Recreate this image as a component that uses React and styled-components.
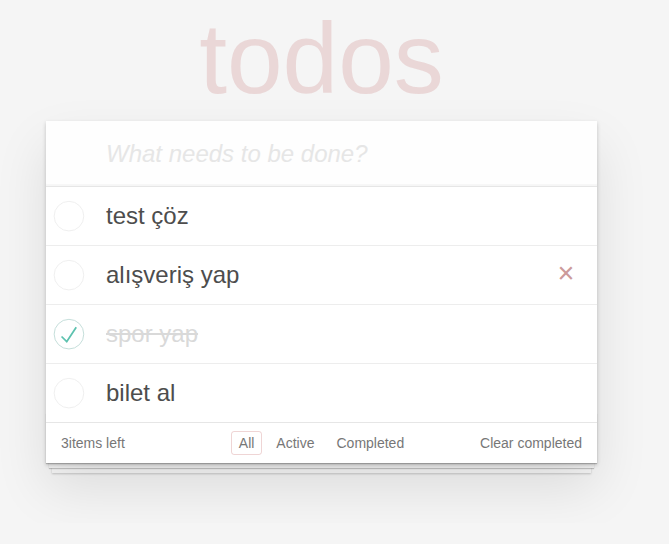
import { createGlobalStyle } from 'styled-components';
import styled from 'styled-components';

const todos = [
  { id: 1, title: 'test çöz', completed: false },
  { id: 2, title: 'alışveriş yap', completed: false, hovered: true },
  { id: 3, title: 'spor yap', completed: true },
  { id: 4, title: 'bilet al', completed: false },
];

const Toggle = ({ checked }) => (
  <ToggleBox>
    <svg width='40' height='40' viewBox='-10 -18 100 135'>
      <circle
        cx='50'
        cy='50'
        r='50'
        fill='none'
        stroke={checked ? '#bddad5' : '#ededed'}
        strokeWidth='3'
      />
      {checked && <path fill='#5dc2af' d='M72 25L42 71 27 56l-4 4 20 20 34-52z' />}
    </svg>
  </ToggleBox>
);

const App = () => {
  const left = todos.filter((t) => !t.completed).length;

  return (
    <>
      <GlobalStyle />
      <Page>
        <Title>todos</Title>
        <TodoApp>
          <Header>
            <NewTodo placeholder='What needs to be done?' />
          </Header>
          <Main>
            <TodoList>
              {todos.map((item) => (
                <TodoItem key={item.id}>
                  <Toggle checked={item.completed} />
                  <Label completed={item.completed}>{item.title}</Label>
                  {item.hovered && <Destroy>×</Destroy>}
                </TodoItem>
              ))}
            </TodoList>
          </Main>
          <Footer>
            <Count>{`${left}items left`}</Count>
            <Filters>
              <FilterLink selected>All</FilterLink>
              <FilterLink>Active</FilterLink>
              <FilterLink>Completed</FilterLink>
            </Filters>
            <ClearCompleted>Clear completed</ClearCompleted>
          </Footer>
        </TodoApp>
      </Page>
    </>
  );
};

export default App;

const GlobalStyle = createGlobalStyle`
  html, body {
    margin: 0;
    padding: 0;
  }

  body {
    background: #f5f5f5;
    color: #4d4d4d;
    font: 14px 'Helvetica Neue', Helvetica, 'Liberation Sans', Arial, sans-serif;
    line-height: 1.4em;
    -webkit-font-smoothing: antialiased;
  }
`;

const Page = styled.div`
  width: 551px;
  margin: 0 0 0 46px;
  padding: 8px 0 60px;
`;

const Title = styled.h1`
  margin: 0 0 13px;
  height: 100px;
  font-size: 100px;
  line-height: 100px;
  font-weight: 100;
  text-align: center;
  color: rgba(175, 47, 47, 0.15);
  text-rendering: optimizeLegibility;
`;

const TodoApp = styled.section`
  position: relative;
  background: #fff;
  box-shadow: 0 2px 4px 0 rgba(0, 0, 0, 0.2), 0 25px 50px 0 rgba(0, 0, 0, 0.1);
`;

const Header = styled.header`
  display: flex;
`;

const NewTodo = styled.input`
  box-sizing: border-box;
  width: 100%;
  height: 65px;
  margin: 0;
  padding: 16px 16px 16px 60px;
  border: none;
  outline: none;
  background: rgba(0, 0, 0, 0.003);
  box-shadow: inset 0 -2px 1px rgba(0, 0, 0, 0.03);
  font-family: inherit;
  font-size: 24px;
  line-height: 1.4em;
  color: inherit;

  &::placeholder {
    font-style: italic;
    font-weight: 300;
    color: #e6e6e6;
  }
`;

const Main = styled.section`
  border-top: 1px solid #e6e6e6;
`;

const TodoList = styled.ul`
  margin: 0;
  padding: 0;
  list-style: none;
`;

const TodoItem = styled.li`
  display: flex;
  align-items: center;
  height: 58px;
  font-size: 24px;
  border-bottom: 1px solid #ededed;

  &:last-child {
    border-bottom: none;
  }
`;

const ToggleBox = styled.div`
  display: flex;
  align-items: center;
  width: 40px;
  height: 40px;
  margin-right: 20px;
`;

const Label = styled.label`
  flex: 1;
  line-height: 1.2;
  word-break: break-all;
  color: ${({ completed }) => (completed ? '#d9d9d9' : '#4d4d4d')};
  text-decoration: ${({ completed }) => (completed ? 'line-through' : 'none')};
  transition: color 0.4s;
`;

const Destroy = styled.button`
  width: 40px;
  height: 40px;
  margin: 0 11px 5px 0;
  padding: 0;
  border: none;
  background: none;
  font-family: inherit;
  font-size: 29px;
  line-height: 40px;
  color: #cc9a9a;
  cursor: pointer;
`;

const Footer = styled.footer`
  position: relative;
  display: grid;
  grid-template-columns: 1fr auto 1fr;
  grid-template-rows: 20px;
  align-items: center;
  height: 20px;
  padding: 10px 15px;
  color: #777;
  border-top: 1px solid #e6e6e6;

  &:before {
    content: '';
    position: absolute;
    right: 0;
    bottom: 0;
    left: 0;
    height: 50px;
    overflow: hidden;
    z-index: -1;
    box-shadow: 0 1px 1px rgba(0, 0, 0, 0.2), 0 8px 0 -3px #f6f6f6,
      0 9px 1px -3px rgba(0, 0, 0, 0.2), 0 16px 0 -6px #f6f6f6,
      0 17px 2px -6px rgba(0, 0, 0, 0.2);
  }
`;

const Count = styled.span`
  text-align: left;
  line-height: 20px;
`;

const Filters = styled.ul`
  display: flex;
  margin: 0;
  padding: 0;
  list-style: none;
`;

const FilterLink = styled.li`
  margin: 0 3px;
  padding: 3px 7px;
  border: 1px solid
    ${({ selected }) => (selected ? 'rgba(175, 47, 47, 0.2)' : 'transparent')};
  border-radius: 3px;
  line-height: 16px;
  color: inherit;
  cursor: pointer;
`;

const ClearCompleted = styled.button`
  justify-self: end;
  padding: 0;
  margin: 0;
  border: none;
  background: none;
  font: inherit;
  line-height: 20px;
  color: inherit;
  cursor: pointer;
`;
